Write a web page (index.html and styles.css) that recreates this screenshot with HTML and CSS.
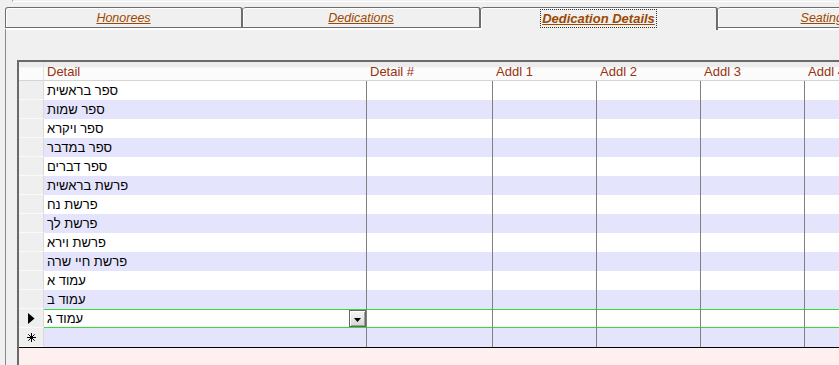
FILE: index.html
```html
<!DOCTYPE html>
<html lang="en">
<head>
    <meta charset="UTF-8">
    <title>Dedication Details</title>
    <link rel="stylesheet" href="styles.css">
</head>
<body>
    <div class="topedge"></div>

    <!-- Tab strip -->
    <div class="tabs">
        <div class="tab"><span>Honorees</span></div>
        <div class="tab"><span>Dedications</span></div>
        <div class="tab active"><span>Dedication Details</span></div>
        <div class="tab"><span>Seating Plan</span></div>
    </div>

    <div class="page">
        <div class="sheet">
            <div class="grid">
                <div class="row head">
                    <div class="sel"></div>
                    <div class="cell">Detail</div>
                    <div class="cell">Detail #</div>
                    <div class="cell">Addl 1</div>
                    <div class="cell">Addl 2</div>
                    <div class="cell">Addl 3</div>
                    <div class="cell">Addl 4</div>
                </div>
                <div class="row"><div class="sel"></div><div class="cell">ספר בראשית</div><div class="cell"></div><div class="cell"></div><div class="cell"></div><div class="cell"></div><div class="cell"></div></div>
                <div class="row alt"><div class="sel"></div><div class="cell">ספר שמות</div><div class="cell"></div><div class="cell"></div><div class="cell"></div><div class="cell"></div><div class="cell"></div></div>
                <div class="row"><div class="sel"></div><div class="cell">ספר ויקרא</div><div class="cell"></div><div class="cell"></div><div class="cell"></div><div class="cell"></div><div class="cell"></div></div>
                <div class="row alt"><div class="sel"></div><div class="cell">ספר במדבר</div><div class="cell"></div><div class="cell"></div><div class="cell"></div><div class="cell"></div><div class="cell"></div></div>
                <div class="row"><div class="sel"></div><div class="cell">ספר דברים</div><div class="cell"></div><div class="cell"></div><div class="cell"></div><div class="cell"></div><div class="cell"></div></div>
                <div class="row alt"><div class="sel"></div><div class="cell">פרשת בראשית</div><div class="cell"></div><div class="cell"></div><div class="cell"></div><div class="cell"></div><div class="cell"></div></div>
                <div class="row"><div class="sel"></div><div class="cell">פרשת נח</div><div class="cell"></div><div class="cell"></div><div class="cell"></div><div class="cell"></div><div class="cell"></div></div>
                <div class="row alt"><div class="sel"></div><div class="cell">פרשת לך</div><div class="cell"></div><div class="cell"></div><div class="cell"></div><div class="cell"></div><div class="cell"></div></div>
                <div class="row"><div class="sel"></div><div class="cell">פרשת וירא</div><div class="cell"></div><div class="cell"></div><div class="cell"></div><div class="cell"></div><div class="cell"></div></div>
                <div class="row alt"><div class="sel"></div><div class="cell">פרשת חיי שרה</div><div class="cell"></div><div class="cell"></div><div class="cell"></div><div class="cell"></div><div class="cell"></div></div>
                <div class="row"><div class="sel"></div><div class="cell">עמוד א</div><div class="cell"></div><div class="cell"></div><div class="cell"></div><div class="cell"></div><div class="cell"></div></div>
                <div class="row alt"><div class="sel"></div><div class="cell">עמוד ב</div><div class="cell"></div><div class="cell"></div><div class="cell"></div><div class="cell"></div><div class="cell"></div></div>

                <!-- current record -->
                <div class="row current">
                    <div class="sel">
                        <svg width="7" height="11" viewBox="0 0 7 11"><polygon points="0,0 6.5,5.5 0,11" fill="#000"/></svg>
                    </div>
                    <div class="cell combo">
                        <span>עמוד ג</span>
                        <div class="drop">
                            <svg width="7" height="4" viewBox="0 0 7 4"><polygon points="0,0 7,0 3.5,4" fill="#000"/></svg>
                        </div>
                    </div>
                    <div class="cell"></div><div class="cell"></div><div class="cell"></div><div class="cell"></div><div class="cell"></div>
                </div>

                <!-- new record -->
                <div class="row alt">
                    <div class="sel">
                        <svg width="9" height="9" viewBox="0 0 9 9" stroke="#000" stroke-width="1">
                            <line x1="4.5" y1="0" x2="4.5" y2="9"/>
                            <line x1="0" y1="4.5" x2="9" y2="4.5"/>
                            <line x1="1.3" y1="1.3" x2="7.7" y2="7.7"/>
                            <line x1="7.7" y1="1.3" x2="1.3" y2="7.7"/>
                        </svg>
                    </div>
                    <div class="cell"></div><div class="cell"></div><div class="cell"></div><div class="cell"></div><div class="cell"></div><div class="cell"></div>
                </div>
            </div>
        </div>
    </div>
</body>
</html>
```

FILE: styles.css
```css
body {
    margin: 0;
    width: 839px;
    height: 365px;
    overflow: hidden;
    background-color: #f0f0f0;
    font-family: "Liberation Sans", Arial, sans-serif;
}
.topedge {
    height: 1px;
    margin-left: 12px;
    border-left: 1px solid #a0a0a0;
    border-bottom: 1px solid #fff;
}
/* Tabs */
.tabs {
    display: flex;
    align-items: flex-start;
    height: 21px;
    margin: 5px 0 0 5px;
}
.tab {
    flex: none;
    box-sizing: border-box;
    width: 238px;
    height: 21px;
    border: 1px solid #6d6d6d;
    border-left: none;
    border-right-width: 2px;
    border-radius: 3px 3px 0 0;
    box-shadow: inset 1px 1px #fff;
    display: flex;
    align-items: center;
    justify-content: center;
}
.tab:first-child {
    border-left: 1px solid #6d6d6d;
}
.tab span {
    font-size: 12.5px;
    font-style: italic;
    text-decoration: underline;
    color: #9c4800;
}
.tab.active {
    width: 237px;
    height: 23px;
    padding-bottom: 2px;
    border-bottom: none;
    background-color: #f0f0f0;
    position: relative;
    z-index: 1;
}
.tab.active span {
    font-size: 13px;
    font-weight: bold;
    outline: 1px dotted #333;
    outline-offset: 1px;
}
/* Tab page */
.page {
    box-sizing: border-box;
    height: 337px;
    margin-left: 5px;
    border-top: 2px solid #fff;
    border-left: 1px solid #8a8a8a;
    padding: 30px 0 0 11px;
}
/* Datasheet */
.sheet {
    width: 920px;
    height: 305px;
    border-top: 2px solid #6a6a6a;
    border-left: 2px solid #6a6a6a;
    background-color: #fff0f0;
}
.grid {
    border-bottom: 1px solid #000;
}
.row {
    display: grid;
    grid-template-columns: 25px 323px 126px 104px 104px 104px 132px;
    height: 19px;
    background-color: #fff;
}
.row.alt {
    background-color: #e4e4fc;
}
.row > div {
    box-sizing: border-box;
    height: 19px;
}
.sel {
    background-color: #efefef;
    border-right: 1px solid #dadada;
    border-bottom: 1px solid #fafafa;
    display: flex;
    align-items: center;
    justify-content: center;
}
.cell {
    border-right: 1px solid #808080;
    padding-left: 3px;
    font-size: 13px;
    line-height: 19px;
    color: #000;
    white-space: nowrap;
    overflow: hidden;
}
.head .sel,
.head .cell {
    border-right: none;
    border-bottom: 1px solid #d4d4d4;
    background: linear-gradient(#ececec 0, #ececec 26%, #fbfbfb 32%, #fbfbfb 100%);
    line-height: 19px;
}
.head .sel {
    border-right: 1px solid #e2e2e2;
}
.head .cell {
    color: #993311;
}
.current .cell {
    border-top: 1px solid #33dd33;
    border-bottom: 1px solid #33dd33;
    line-height: 17px;
}
.combo {
    display: flex;
    align-items: center;
    justify-content: space-between;
}
.drop {
    box-sizing: border-box;
    width: 17px;
    height: 17px;
    border: 1px solid #666;
    box-shadow: inset 1px 1px #fff, inset -1px -1px #a0a0a0;
    background: linear-gradient(#f6f6f6, #d6d6d6);
    display: flex;
    align-items: center;
    justify-content: center;
    padding-top: 2px;
}
```
